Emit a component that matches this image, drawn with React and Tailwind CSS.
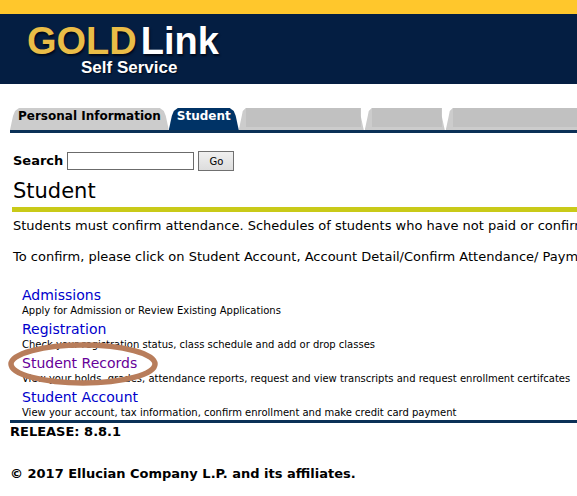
const sections = [
  {
    title: 'Admissions',
    text: 'Apply for Admission or Review Existing Applications',
  },
  {
    title: 'Registration',
    text: 'Check your registration status, class schedule and add or drop classes',
  },
  {
    title: 'Student Records',
    text: 'View your holds, grades, attendance reports, request and view transcripts and request enrollment certifcates',
    visited: true,
    circled: true,
  },
  {
    title: 'Student Account',
    text: 'View your account, tax information, confirm enrollment and make credit card payment',
  },
];

function Tab({ children, active }) {
  return (
    <a
      href="#"
      className={`block h-full shrink-0 px-2 text-[12px] leading-4 font-bold [clip-path:polygon(0_100%,3px_8px,5px_3px,9px_0,calc(100%-9px)_0,calc(100%-5px)_3px,calc(100%-3px)_8px,100%_100%)] ${
        active ? 'bg-[#003366] text-white' : 'bg-[#cccccc] text-black'
      }`}
    >
      {children}
    </a>
  );
}

// tab with its label masked out
function BlankTab({ className }) {
  return (
    <div
      className={`h-full bg-[#cccccc] pl-[7px] pr-1 [clip-path:polygon(0_100%,3px_8px,4px_3px,7px_0,calc(100%-4px)_0,calc(100%-4px)_8px,calc(100%-1px)_100%)] ${className}`}
    >
      <div className="h-[19px] bg-[#c1c1c1]" />
    </div>
  );
}

function Header() {
  return (
    <header className="border-t-14 border-[#ffc72c] bg-[#041e42] font-['Liberation_Sans',Arial,sans-serif] font-bold text-white">
      <div className="h-[70px] w-fit pl-[27px] pt-2">
        <div className="flex gap-1 text-[38px] leading-[38px] [text-shadow:1px_2px_2px_#000a1c]">
          <span className="text-[#eabd47]">GOLD</span>
          <span>Link</span>
        </div>
        <div className="pl-[54px] text-[17px] leading-4 [text-shadow:1px_1px_1px_#000a1c]">
          Self Service
        </div>
      </div>
    </header>
  );
}

function Section({ title, text, visited, circled }) {
  return (
    <li className="relative">
      <a
        href="#"
        className={`block w-fit text-[14px] leading-[18px] ${visited ? 'text-[#660099]' : 'text-[#0000cc]'}`}
      >
        {title}
      </a>
      <p className="text-[10px] leading-[14px]">{text}</p>
      {circled && (
        <svg className="absolute -left-[14px] -top-3 h-11 w-[150px]" viewBox="0 0 150 44" fill="none">
          <ellipse cx="75" cy="22" rx="72" ry="19" stroke="#b87d5b" strokeWidth="5.5" />
        </svg>
      )}
    </li>
  );
}

export default function App() {
  return (
    <div className="min-h-screen overflow-x-hidden bg-white font-['DejaVu_Sans',Verdana,sans-serif] text-[13px] text-black">
      <Header />

      <nav className="ml-[10px] mt-6 flex h-[25px] border-b-3 border-[#0b3157] whitespace-nowrap">
        <Tab>Personal Information</Tab>
        <Tab active>Student</Tab>
        <BlankTab className="w-[126px] shrink-0" />
        <BlankTab className="w-[81px] shrink-0" />
        <BlankTab className="min-w-[140px] flex-1" />
      </nav>

      <main className="pl-3">
        <form className="mt-[18px] flex h-5 items-center" onSubmit={(e) => e.preventDefault()}>
          <label htmlFor="search" className="pl-px font-bold">
            Search
          </label>
          <input
            id="search"
            type="text"
            className="ml-1 h-[18px] w-[127px] border border-[#6b6b6b] bg-white px-1 text-[13px] outline-none"
          />
          <button
            type="submit"
            className="ml-1 h-5 w-9 border border-[#707070] bg-linear-to-b from-[#f0f0f0] to-[#dddddd] text-[10px]"
          >
            Go
          </button>
        </form>

        <h1 className="mt-1 border-b-5 border-[#c9ca18] pl-px text-[21px] leading-8">Student</h1>

        <div className="mt-[6px] pl-px leading-4 whitespace-nowrap">
          <p>Students must confirm attendance. Schedules of students who have not paid or confirmed</p>
          <p className="mt-[15px]">
            To confirm, please click on Student Account, Account Detail/Confirm Attendance/ Payment
          </p>
        </div>

        <ul className="mt-[21px] flex flex-col gap-[2px] pl-[10px] whitespace-nowrap">
          {sections.map((section) => (
            <Section key={section.title} {...section} />
          ))}
        </ul>
      </main>

      <footer className="ml-[10px] border-t-3 border-[#0b3157] font-bold">
        <p className="leading-[18px]">RELEASE: 8.8.1</p>
        <p className="mt-6 leading-[18px]">© 2017 Ellucian Company L.P. and its affiliates.</p>
      </footer>
    </div>
  );
}
